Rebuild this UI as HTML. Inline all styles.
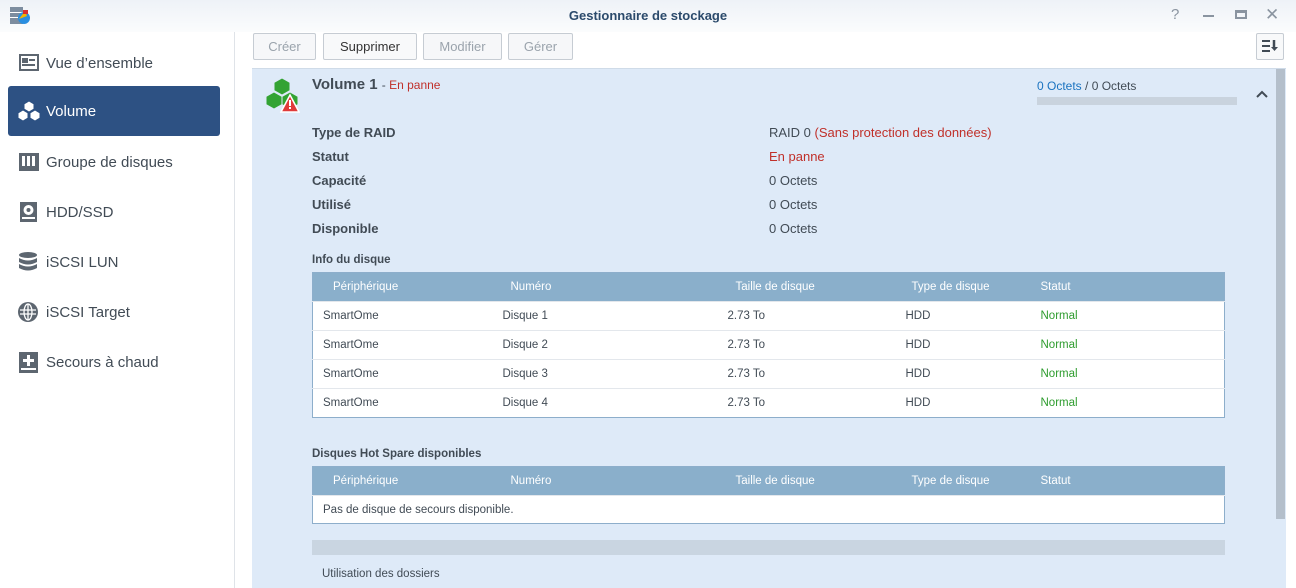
<!DOCTYPE html>
<html><head><meta charset="utf-8"><style>
*{margin:0;padding:0;box-sizing:border-box}
body{width:1296px;height:588px;overflow:hidden;font-family:"Liberation Sans","DejaVu Sans",sans-serif;background:#fff;position:relative;color:#414b55}
.abs{position:absolute}
#title{left:0;top:0;width:1296px;height:32px;background:linear-gradient(#eef2f7,#fbfcfd)}
#title .t{left:0;width:1296px;top:8px;text-align:center;font-size:13px;font-weight:bold;color:#2b4a6b}
#side{left:0;top:32px;width:235px;height:556px;background:#fff;border-right:1px solid #dfe3e8}
.item{position:absolute;left:8px;width:212px;height:50px;font-size:15px;color:#414b55;padding-left:38px;line-height:54px}
.item.sel{background:#2d5183;color:#fff;border-radius:3px;line-height:52px}
.item svg{position:absolute;left:10px;top:16px}
.btn{position:absolute;top:33px;height:27px;border:1px solid #c6ccd3;border-radius:2px;background:#f6f7f9;font-size:13px;line-height:25px;text-align:center;color:#9aa3ac}
.btn.on{color:#333;background:#f8f9fa}
#panel{left:252px;top:68px;width:1034px;height:520px;background:#deeaf8;border-top:1px solid #cfdbe8}
.lab{position:absolute;font-size:13px;font-weight:bold;color:#414b55}
.val{position:absolute;font-size:13px;color:#414b55}
.red{color:#c0302a}
table{position:absolute;border-collapse:collapse;border:1px solid #8daecb;background:#fff;font-size:11.5px}
th{background:#8aafcb;color:#fff;font-weight:normal;height:29px;text-align:left;padding:0}
td{height:29px;border-top:1px solid #e3e7ec;color:#414b55;padding:0}
.g{color:#2e9c2e}
</style></head><body>
<div id="title" class="abs">
 <svg class="abs" style="left:9px;top:6px" width="22" height="20"><rect x="1" y="1" width="13" height="17" fill="#7d8d9f"/><rect x="1" y="6" width="13" height="1" fill="#fff"/><rect x="1" y="11" width="13" height="1" fill="#fff"/><circle cx="15" cy="12" r="6" fill="#2a8ee0"/><path d="M10 13 L16 5 L18 10 Z" fill="#f4b400"/><rect x="14" y="4" width="5" height="4" fill="#d83030"/></svg>
 <div class="abs t">Gestionnaire de stockage</div>
 <div class="abs" style="left:1171px;top:6px;font-size:15px;color:#8a94a0">?</div>
 <div class="abs" style="left:1203px;top:15px;width:11px;height:2px;background:#8a94a0"></div>
 <div class="abs" style="left:1235px;top:10px;width:12px;height:9px;border:2px solid #8a94a0;border-top-width:3px"></div>
 <div class="abs" style="left:1265px;top:5px;font-size:17px;color:#8a94a0">✕</div>
</div>
<div id="side" class="abs">
 <div class="item" style="top:5px"><svg width="22" height="20"><rect x="1" y="1" width="20" height="17" fill="#5d6670"/><rect x="3" y="3" width="16" height="13" fill="#fff"/><rect x="4" y="5" width="6" height="5" fill="#5d6670"/><rect x="11" y="6" width="6" height="2" fill="#5d6670"/><rect x="4" y="11" width="13" height="2" fill="#5d6670"/></svg>Vue d’ensemble</div>
 <div class="item sel" style="top:54px"><svg width="24" height="22" style="left:9px;top:14px"><g fill="#fff" stroke="#2d5183" stroke-width="1"><path d="M12 1 l5 3 v5 l-5 3 l-5-3 v-5z"/><path d="M6 10 l5 3 v5 l-5 3 l-5-3 v-5z"/><path d="M18 10 l5 3 v5 l-5 3 l-5-3 v-5z"/></g></svg>Volume</div>
 <div class="item" style="top:104px"><svg width="22" height="20"><rect x="1" y="1" width="20" height="18" fill="#5d6670"/><rect x="4" y="4" width="3" height="10" fill="#fff"/><rect x="9" y="4" width="3" height="10" fill="#fff"/><rect x="14" y="4" width="3" height="10" fill="#fff"/></svg>Groupe de disques</div>
 <div class="item" style="top:154px"><svg width="22" height="20"><rect x="2" y="0" width="17" height="20" fill="#5d6670"/><circle cx="10.5" cy="8" r="5" fill="#fff"/><circle cx="10.5" cy="8" r="2" fill="#5d6670"/><rect x="4" y="15" width="13" height="2" fill="#fff"/></svg>HDD/SSD</div>
 <div class="item" style="top:204px"><svg width="22" height="20"><g fill="#5d6670"><ellipse cx="10" cy="3" rx="9" ry="3"/><path d="M1 6 q9 5 18 0 v4 q-9 5 -18 0z"/><path d="M1 12 q9 5 18 0 v4 q-9 5 -18 0z"/></g></svg>iSCSI LUN</div>
 <div class="item" style="top:254px"><svg width="22" height="22"><circle cx="10" cy="10" r="10" fill="#5d6670"/><g stroke="#fff" stroke-width="1.3" fill="none"><ellipse cx="10" cy="10" rx="4" ry="8"/><path d="M10 2v16M2 8h16M2 12h16"/></g></svg>iSCSI Target</div>
 <div class="item" style="top:304px"><svg width="22" height="22"><rect x="1" y="0" width="19" height="21" fill="#5d6670"/><path d="M10.5 3v11M5 8.5h11" stroke="#fff" stroke-width="3"/><rect x="3" y="16" width="15" height="2" fill="#fff"/></svg>Secours à chaud</div>
</div>
<div class="btn" style="left:253px;width:63px">Créer</div>
<div class="btn on" style="left:323px;width:94px">Supprimer</div>
<div class="btn" style="left:423px;width:79px">Modifier</div>
<div class="btn" style="left:508px;width:65px">Gérer</div>
<div class="btn on" style="left:1256px;width:28px"><svg width="18" height="14" style="margin-top:5px"><path d="M1 2h8M1 7h8M1 12h8" stroke="#414b55" stroke-width="2"/><path d="M13 1v8" stroke="#414b55" stroke-width="2.5"/><path d="M10 8h7l-3.5 4z" fill="#414b55"/></svg></div>
<div id="panel" class="abs">
 <svg class="abs" style="left:12px;top:9px" width="36" height="36"><g fill="#33a333" stroke="#deeaf8" stroke-width="1"><path d="M18 0 l8 4.5 v8 l-8 4.5 l-8-4.5 v-8z"/><path d="M10 14 l8 4.5 v8 l-8 4.5 l-8-4.5 v-8z"/><path d="M26 14 l8 4.5 v8 l-8 4.5 l-8-4.5 v-8z"/></g><path d="M26 17 L35 34 H17 Z" fill="#e03a3a" stroke="#fff" stroke-width="1.5"/><rect x="25" y="22" width="2" height="6" fill="#fff"/><rect x="25" y="29" width="2" height="2" fill="#fff"/></svg>
 <div class="abs" style="left:60px;top:7px;font-size:15px;font-weight:bold;color:#414b55">Volume 1 <span style="font-size:12px;font-weight:normal">- <span class="red">En panne</span></span></div>
 <div class="val" style="left:785px;top:10px;font-size:12px"><span style="color:#1a73c0">0 Octets</span> / 0 Octets</div>
 <div class="abs" style="left:785px;top:28px;width:200px;height:8px;background:#c9d3de"></div>
 <svg class="abs" style="left:1003px;top:20px" width="14" height="10"><path d="M2 8l5-5 5 5" stroke="#414b55" stroke-width="2" fill="none"/></svg>
 <div class="abs" style="left:1024px;top:0;width:9px;height:450px;background:#b4bfcb"></div>
 <div class="lab" style="left:60px;top:56px">Type de RAID</div><div class="val" style="left:517px;top:56px">RAID 0 <span class="red">(Sans protection des données)</span></div>
 <div class="lab" style="left:60px;top:80px">Statut</div><div class="val red" style="left:517px;top:80px">En panne</div>
 <div class="lab" style="left:60px;top:104px">Capacité</div><div class="val" style="left:517px;top:104px">0 Octets</div>
 <div class="lab" style="left:60px;top:128px">Utilisé</div><div class="val" style="left:517px;top:128px">0 Octets</div>
 <div class="lab" style="left:60px;top:152px">Disponible</div><div class="val" style="left:517px;top:152px">0 Octets</div>
 <div class="lab" style="left:60px;top:185px;font-size:11.5px">Info du disque</div>
 <table style="left:60px;top:203px;width:913px">
  <colgroup><col style="width:190px"><col style="width:225px"><col style="width:178px"><col style="width:135px"><col></colgroup>
  <tr><th style="padding-left:20px">Périphérique</th><th style="padding-left:8px">Numéro</th><th style="padding-left:8px">Taille de disque</th><th style="padding-left:6px">Type de disque</th><th>Statut</th></tr>
  <tr><td style="padding-left:10px">SmartOme</td><td>Disque 1</td><td>2.73 To</td><td>HDD</td><td class="g">Normal</td></tr>
  <tr><td style="padding-left:10px">SmartOme</td><td>Disque 2</td><td>2.73 To</td><td>HDD</td><td class="g">Normal</td></tr>
  <tr><td style="padding-left:10px">SmartOme</td><td>Disque 3</td><td>2.73 To</td><td>HDD</td><td class="g">Normal</td></tr>
  <tr><td style="padding-left:10px">SmartOme</td><td>Disque 4</td><td>2.73 To</td><td>HDD</td><td class="g">Normal</td></tr>
 </table>
 <div class="lab" style="left:60px;top:379px;font-size:11.5px">Disques Hot Spare disponibles</div>
 <table style="left:60px;top:397px;width:913px">
  <colgroup><col style="width:190px"><col style="width:225px"><col style="width:178px"><col style="width:135px"><col></colgroup>
  <tr><th style="padding-left:20px">Périphérique</th><th style="padding-left:8px">Numéro</th><th style="padding-left:8px">Taille de disque</th><th style="padding-left:6px">Type de disque</th><th>Statut</th></tr>
  <tr><td colspan="5" style="padding-left:10px;height:28px">Pas de disque de secours disponible.</td></tr>
 </table>
 <div class="abs" style="left:60px;top:471px;width:913px;height:15px;background:#c9d5e1"></div>
 <div class="val" style="left:70px;top:499px;font-size:11.5px">Utilisation des dossiers</div>
</div>
</body></html>
